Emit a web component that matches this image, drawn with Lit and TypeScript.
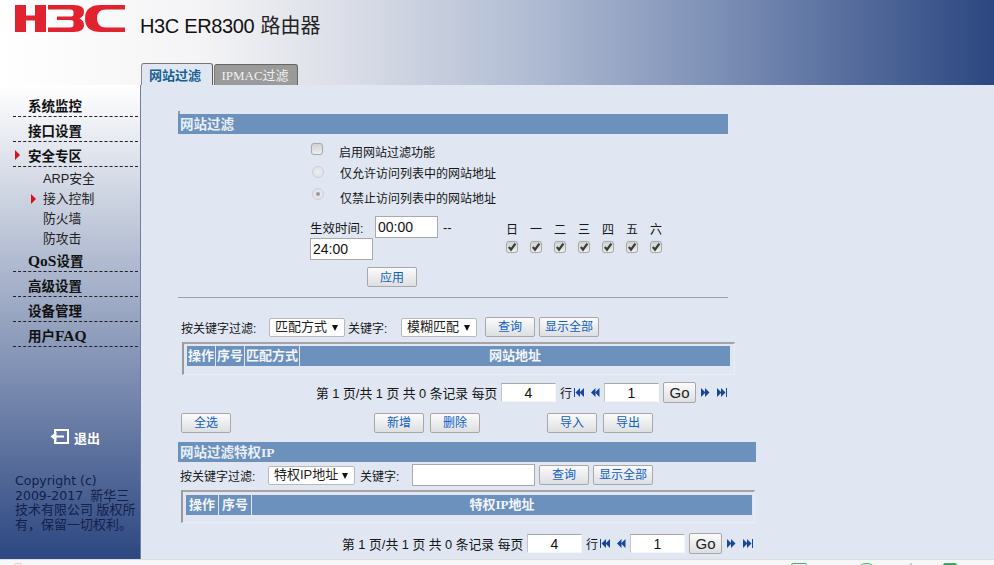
import { LitElement, html, css, svg } from "lit";
import { customElement } from "lit/decorators.js";

const check = html`<svg viewBox="0 0 12 12" width="12" height="12"><path d="M2.8 6 5 8.6 9.4 2.6" fill="none" stroke="#3c3c3c" stroke-width="2.3"/></svg>`;

const tri = (x: number, dir: number) =>
  dir < 0
    ? svg`<path d="M${x + 4.5} 0v9L${x} 4.5z" fill="#17469a"/>`
    : svg`<path d="M${x} 0v9L${x + 4.5} 4.5z" fill="#17469a"/>`;

const first = html`<svg class="pi ml2" width="10" height="9" viewBox="0 0 10 9"><rect width="1" height="9" fill="#17469a"/>${tri(1.5, -1)}${tri(5.5, -1)}</svg>`;
const prev = html`<svg class="pi ml7" width="9" height="9" viewBox="0 0 9 9">${tri(0, -1)}${tri(4, -1)}</svg>`;
const next = html`<svg class="pi ml5" width="9" height="9" viewBox="0 0 9 9">${tri(0, 1)}${tri(4, 1)}</svg>`;
const last = html`<svg class="pi ml7" width="10" height="9" viewBox="0 0 10 9">${tri(0, 1)}${tri(4, 1)}<rect x="9" width="1" height="9" fill="#17469a"/></svg>`;

@customElement("app-root")
export class AppRoot extends LitElement {
  static styles = css`
    :host {
      display: grid;
      grid-template-columns: 141px 853px;
      grid-template-rows: 85px 474px 6px;
      width: 994px;
      height: 565px;
      overflow: hidden;
      font: 12px "Liberation Sans", "Noto Sans CJK SC", sans-serif;
      color: #151515;
      background: #e0e7f3;
    }
    .b { font-family: "Liberation Serif", "Noto Sans CJK SC", serif; font-weight: 700; }

    header {
      grid-column: 1 / 3;
      display: flex;
      flex-direction: column;
      background: linear-gradient(90deg, #fff 0, #f4f4f6 20%, #dcdfe8 34%, #b4bfd5 52%, #7d90b6 72%, #2c4781 100%);
    }
    .brand { display: flex; height: 63px; align-items: flex-start; }
    .logo { margin: 5px 0 0 15px; }
    .title { margin: 13px 0 0 15px; font-size: 20px; line-height: 26px; color: #111; letter-spacing: -0.35px; }
    .title span { letter-spacing: 0; margin-left: 1px; color: #222; }
    .tabs { display: flex; margin-left: 141px; align-items: flex-end; height: 22px; gap: 1px; }
    .tab { box-sizing: border-box; height: 22px; text-align: center; font-size: 13px; border-radius: 3px 3px 0 0; }
    .tab.on { width: 72px; padding-right: 4px; background: #e0e7f3; color: #15608f; border-top: 1px solid #777; border-left: 1px solid #888; border-right: 1px solid #555; line-height: 23px; }
    .tab.off { width: 84px; height: 21px; padding-right: 2px; background: #9a9a9a; color: #f0f0f0; border-top: 1px solid #666; border-left: 1px solid #777; border-right: 1px solid #666; line-height: 21px; font-weight: 400; }

    aside {
      display: flex;
      flex-direction: column;
      padding-top: 7px;
      background: linear-gradient(#fff, #2c4781);
      border-right: 1px solid #6f7f9c;
      box-sizing: border-box;
    }
    .nav { position: relative; margin-left: 13px; width: 125px; box-sizing: border-box; height: 25px; padding-left: 15px; border-bottom: 1px dashed #222; font-size: 13.5px; line-height: 29px; color: #111; }
    .lat { font-size: 15.5px; line-height: 1; }
    .sub { position: relative; margin-left: 43px; height: 20px; font-size: 12.8px; line-height: 24px; color: #222; }
    .on-arrow::before { content: ""; position: absolute; border-left: 5px solid #d8101c; border-top: 5px solid transparent; border-bottom: 5px solid transparent; }
    .nav.on-arrow::before { left: 2px; top: 8px; }
    .sub.on-arrow::before { left: -12px; top: 7px; }
    .logout { display: flex; align-items: center; margin: 80px 0 0 50px; height: 20px; gap: 4px; color: #fff; font-size: 13px; font-weight: 700; }
    .copy { margin: 27px 0 0 15px; font-size: 13px; line-height: 14.6px; color: #14204a; }
    .copy .en { font-family: "DejaVu Sans", sans-serif; font-size: 12.5px; }

    main { padding-left: 37px; overflow: hidden; }
    .bar { position: relative; box-sizing: border-box; height: 20px; padding-left: 2px; background: #6c91bd; color: #e9eff7; font-size: 13.5px; line-height: 22px; }
    .s1 { margin-top: 29px; width: 550px; }
    .s1::before { content: ""; position: absolute; left: 0; top: -3px; width: 2px; height: 3px; background: #999; }
    .s2 { margin-top: 9px; width: 578px; }

    .opts { margin: 8px 0 0 133px; }
    .opt { display: flex; align-items: flex-start; }
    .opt .t { line-height: 23px; margin-left: 16px; }
    .box, .radio { flex: none; box-sizing: border-box; width: 12px; height: 12px; border: 1px solid #a9a9a9; }
    .box { border-radius: 3px; display: block; background: linear-gradient(#d2d2d0, #ecedec); box-shadow: 0 0 1px #c4c8d0; }
    .box svg { display: block; margin: -1px; }
    .radio { border-radius: 50%; border-color: #cdd1d8; background: radial-gradient(#eceef2, #dadde3); position: relative; }
    .radio.chk::after { content: ""; position: absolute; left: 3px; top: 3px; width: 4px; height: 4px; border-radius: 50%; background: #9a9a9a; }
    .o1 { height: 21px; } .o1 .box { margin-top: 1px; }
    .o2 { height: 23px; padding-left: 1px; } .o2 .radio { margin-top: 3px; }
    .o3 { height: 24px; padding-left: 1px; } .o3 .radio { margin-top: 2px; } .o3 .t { line-height: 26px; }

    .time { display: flex; margin: 6px 0 0 132px; }
    .tl { width: 190px; }
    .tr1 { display: flex; align-items: center; height: 22px; }
    .tin { box-sizing: border-box; width: 63px; height: 22px; border: 1px solid #a9a9a9; background: #fff; font: 14px "Liberation Sans", sans-serif; padding: 0 2px; color: #111; display: block; }
    .tlab { width: 65px; font-size: 12.5px; }
    .dash { margin-left: 5px; font-size: 13px; }
    .days { display: grid; grid-template-columns: repeat(7, 24px); grid-template-rows: 20px 15px; padding-top: 2px; justify-items: center; align-items: center; }
    .days .box { align-self: end; }

    button { box-sizing: border-box; height: 20px; padding: 0; border: 1px solid #a8a8a8; border-radius: 2px; background: linear-gradient(#fbfbfb, #dedfe2); color: #0d5fc4; font: 12px "Liberation Sans", "Noto Sans CJK SC", sans-serif; line-height: 19px; flex: none; }
    .w50 { width: 50px; } .w60 { width: 60px; }
    .apply { display: block; margin: 7px 0 0 189px; line-height: 21px; }
    hr { margin: 10px 0 0; border: 0; height: 1px; width: 550px; background: #9fa3a9; }

    .filter { display: flex; align-items: center; }
    .f1 { margin: 19px 0 0 3px; height: 20px; }
    .f2 { margin: 2px 0 0 2px; height: 22px; }
    .lab { flex: none; width: 88px; }
    .lab2 { flex: none; width: 53px; margin-left: 3px; }
    .lab3 { flex: none; width: 52px; margin-left: 5px; }
    .sel { flex: none; box-sizing: border-box; height: 19px; border: 1px solid #b9b9b9; border-radius: 2px; background: #fff; padding-left: 5px; font-size: 13px; line-height: 16px; position: relative; color: #222; }
    .sel::after { content: ""; position: absolute; right: 6px; top: 6px; border-top: 6px solid #111; border-left: 3.5px solid transparent; border-right: 3.5px solid transparent; }
    .w76 { width: 76px; } .w87 { width: 87px; }
    .ml2 { margin-left: 2px; } .ml4 { margin-left: 4px; } .ml5 { margin-left: 5px; } .ml6 { margin-left: 6px; }
    .ml7 { margin-left: 7px; } .ml8 { margin-left: 8px; } .ml67 { margin-left: 67px; } .ml143 { margin-left: 143px; }
    .kw { box-sizing: border-box; width: 123px; height: 22px; border: 1px solid #a9a9a9; background: #fff; flex: none; display: block; padding: 0; }

    .tbl { box-sizing: border-box; height: 33px; border-top: 2px solid #a4a4a4; border-left: 2px solid #9a9a9a; border-bottom: 1px solid #eaf0f8; border-right: 1px solid #e8edf6; }
    .t1 { margin: 5px 0 0 4px; width: 553px; padding: 2px 0 0 3px; }
    .t2 { margin: 4px 0 0 3px; width: 574px; padding: 3px 0 0 3px; }
    .row { display: flex; gap: 1px; height: 20px; color: #f2f5fa; font-size: 13px; line-height: 20px; text-align: center; }
    .row div { background: #6c91bd; flex: none; }
    .c28 { width: 28px; } .c54 { width: 54px; } .c430 { width: 430px; } .c32 { width: 32px; } .c500 { width: 500px; }

    .pager { display: flex; align-items: center; height: 21px; }
    .p1 { margin: 7px 0 0 138px; }
    .p2 { margin: 10px 0 0 164px; }
    .ptxt { width: 181px; flex: none; white-space: pre; font-size: 12.8px; }
    .pin { box-sizing: border-box; flex: none; width: 55px; height: 19px; border: 1px solid #f4f6fa; border-top-color: #a8a8a8; border-left-color: #c4c4c4; background: #fff; text-align: center; font: 14px "Liberation Sans", sans-serif; color: #111; padding: 0; display: block; }
    .pi { flex: none; display: block; }
    .go { width: 33px; height: 21px; color: #222; font: 15px "Liberation Sans", sans-serif; }
    .hang { margin-left: 4px; width: 12px; flex: none; }

    .acts { display: flex; margin: 10px 0 0 3px; }

    footer { grid-column: 1 / 3; position: relative; background: #f7f7f7; border-top: 1px solid #dcdcdc; box-sizing: border-box; overflow: hidden; }
    footer i { position: absolute; top: 3px; height: 6px; border: 1px solid #3fae6a; border-radius: 2px; box-sizing: border-box; }
    .m1 { left: 791px; width: 16px; }
    .m2 { left: 860px; width: 13px; border-radius: 50%; }
    .m3 { left: 943px; width: 14px; background: #2fa85c; }
    .m4 { left: 910px; width: 2px; border-color: #bbb; }
    .m5 { left: 14px; width: 8px; border-color: #f4c9c4; }
  `;

  private pager(cls: string) {
    return html`<div class="pager ${cls}">
      <span class="ptxt">第 1 页/共 1 页 共 0 条记录 每页</span>
      <input class="pin ml4" value="4" />
      <span class="hang">行</span>
      ${first}${prev}
      <input class="pin ml4" value="1" />
      <button class="go ml4">Go</button>
      ${next}${last}
    </div>`;
  }

  render() {
    const days = ["日", "一", "二", "三", "四", "五", "六"];
    return html`
      <header>
        <div class="brand">
          <svg class="logo" width="110" height="27" viewBox="0 0 110 27" fill="#e0232e">
            <path d="M0 0h11v10.5h9V0h11v27H20V15.5h-9V27H0z" />
            <path d="M33 0h26q10 0 10 6.5 0 5-4.500 7 4.500 2 4.500 7 0 6.500-10 6.500H33v-4.500h22q3.500 0 3.500-2.500v-3q0-2-3.500-2H42v-3.500h13q3.500 0 3.500-2v-2.500q0-2.500-3.500-2.500H33z" />
            <path d="M110 0H86q-16 0-16 13.500T86 27h24v-4.500H91q-9 0-9-9t9-9h19z" />
          </svg>
          <div class="title">H3C ER8300 <span>路由器</span></div>
        </div>
        <div class="tabs">
          <div class="tab on b">网站过滤</div>
          <div class="tab off b">IPMAC过滤</div>
        </div>
      </header>

      <aside>
        <div class="nav b">系统监控</div>
        <div class="nav b">接口设置</div>
        <div class="nav b on-arrow">安全专区</div>
        <div class="sub">ARP安全</div>
        <div class="sub on-arrow">接入控制</div>
        <div class="sub">防火墙</div>
        <div class="sub">防攻击</div>
        <div class="nav b"><span class="lat">QoS</span>设置</div>
        <div class="nav b">高级设置</div>
        <div class="nav b">设备管理</div>
        <div class="nav b">用户<span class="lat">FAQ</span></div>
        <div class="logout">
          <svg width="20" height="18" viewBox="0 0 20 18" fill="none" stroke="#fff" stroke-width="2">
            <path d="M5 5V2h13v13H5v-3" />
            <path d="M14 8.500H5" />
            <path d="M6.500 3.500v10L0.500 8.500z" fill="#fff" stroke="none" />
          </svg>
          <span>退出</span>
        </div>
        <div class="copy"><span class="en">Copyright (c)</span><br /><span class="en">2009-2017</span>&nbsp; 新华三<br />技术有限公司 版权所<br />有，保留一切权利。</div>
      </aside>

      <main>
        <div class="bar b s1">网站过滤</div>
        <div class="opts">
          <div class="opt o1"><span class="box"></span><span class="t">启用网站过滤功能</span></div>
          <div class="opt o2"><span class="radio"></span><span class="t">仅允许访问列表中的网站地址</span></div>
          <div class="opt o3"><span class="radio chk"></span><span class="t">仅禁止访问列表中的网站地址</span></div>
        </div>
        <div class="time">
          <div class="tl">
            <div class="tr1"><span class="tlab">生效时间:</span><input class="tin" value="00:00" /><span class="dash">--</span></div>
            <input class="tin" value="24:00" />
          </div>
          <div class="days">
            ${days.map((d) => html`<span>${d}</span>`)}
            ${days.map(() => html`<span class="box">${check}</span>`)}
          </div>
        </div>
        <button class="w50 apply">应用</button>
        <hr />

        <div class="filter f1">
          <span class="lab">按关键字过滤:</span>
          <span class="sel w76">匹配方式</span>
          <span class="lab2">关键字:</span>
          <span class="sel w76">模糊匹配</span>
          <button class="w50 ml8">查询</button>
          <button class="w60 ml4">显示全部</button>
        </div>
        <div class="tbl t1">
          <div class="row b">
            <div class="c28">操作</div>
            <div class="c28">序号</div>
            <div class="c54">匹配方式</div>
            <div class="c430">网站地址</div>
          </div>
        </div>
        ${this.pager("p1")}
        <div class="acts">
          <button class="w50">全选</button>
          <button class="w50 ml143">新增</button>
          <button class="w50 ml6">删除</button>
          <button class="w50 ml67">导入</button>
          <button class="w50 ml6">导出</button>
        </div>

        <div class="bar b s2">网站过滤特权IP</div>
        <div class="filter f2">
          <span class="lab">按关键字过滤:</span>
          <span class="sel w87">特权IP地址</span>
          <span class="lab3">关键字:</span>
          <input class="kw" />
          <button class="w50 ml4">查询</button>
          <button class="w60 ml4">显示全部</button>
        </div>
        <div class="tbl t2">
          <div class="row b">
            <div class="c32">操作</div>
            <div class="c32">序号</div>
            <div class="c500">特权IP地址</div>
          </div>
        </div>
        ${this.pager("p2")}
      </main>

      <footer>
        <i class="m5"></i>
        <i class="m1"></i>
        <i class="m2"></i>
        <i class="m4"></i>
        <i class="m3"></i>
      </footer>
    `;
  }
}
